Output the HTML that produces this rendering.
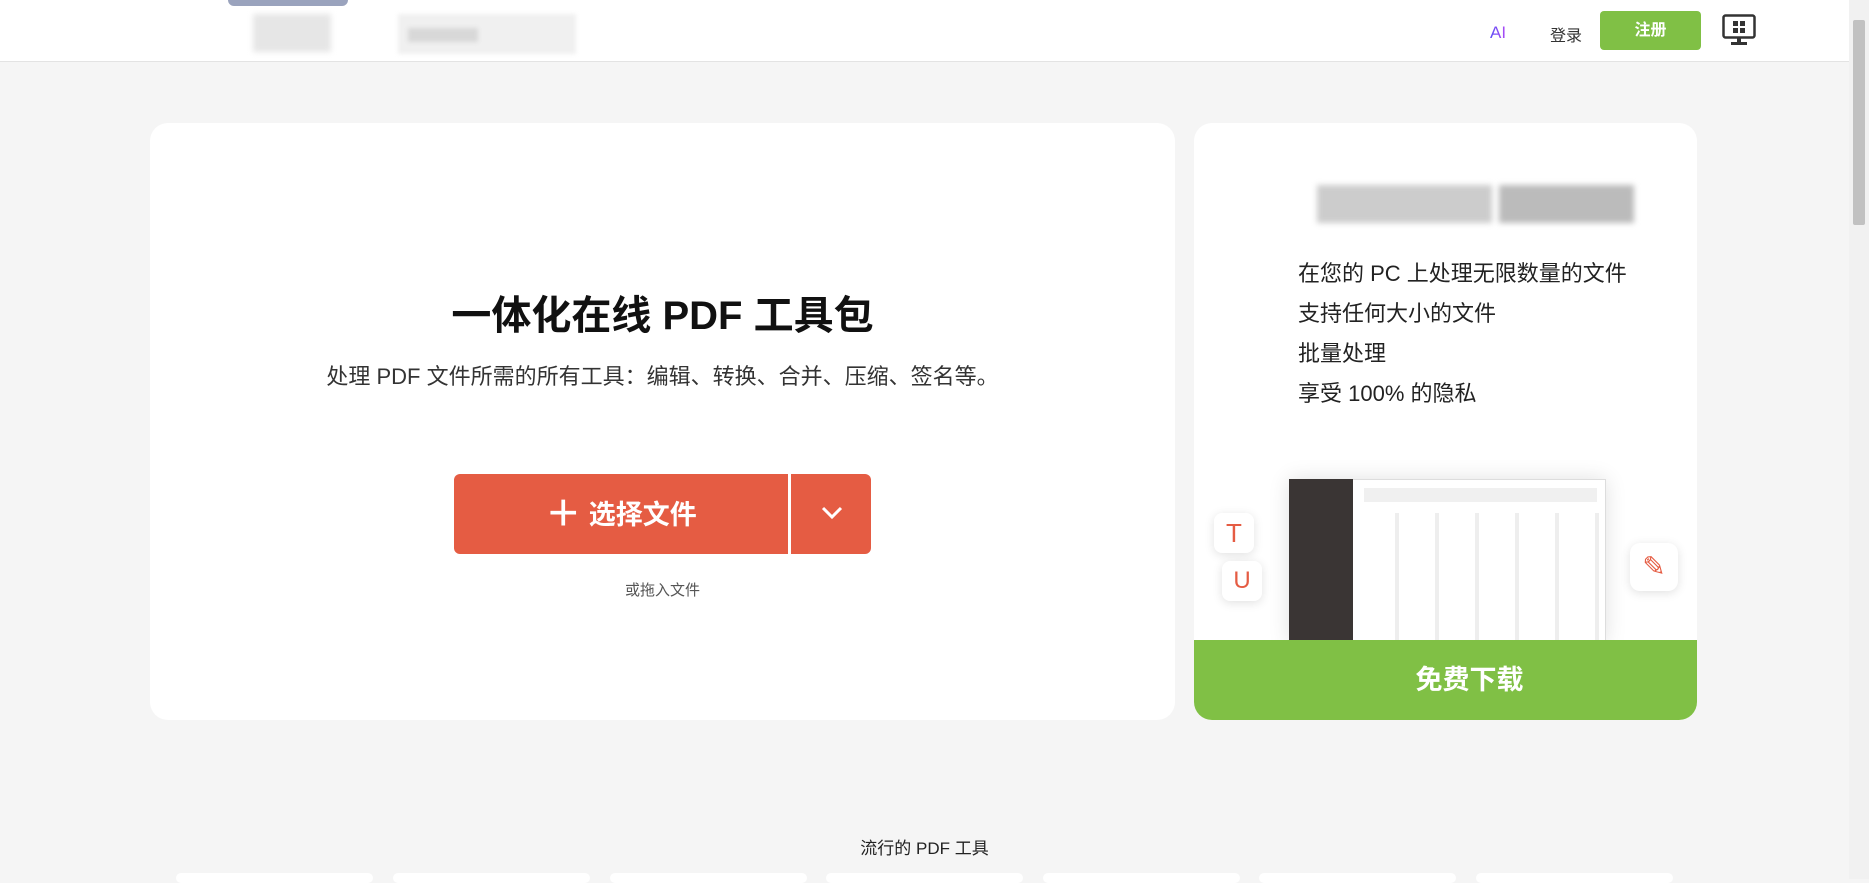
<!DOCTYPE html>
<html><head><meta charset="utf-8"><style>
*{box-sizing:border-box;margin:0;padding:0}
body{width:1869px;height:879px;overflow:hidden;background:#f5f5f5;font-family:"Liberation Sans","Noto Sans CJK SC",sans-serif;position:relative}
.hdr{position:absolute;left:0;top:0;width:1849px;height:62px;background:#fff;border-bottom:1px solid #e3e3e3}
.abs{position:absolute}
.card{position:absolute;background:#fff;border-radius:18px}
.sb{position:absolute;right:0;top:0;width:20px;height:879px;background:#f1f1f1}
</style></head><body>
<div class="hdr">
 <div class="abs" style="left:228px;top:0;width:120px;height:6px;background:#9aa3bd;border-radius:0 0 20px 20px"></div>
 <div class="abs" style="left:253px;top:14px;width:78px;height:38px;background:#e6e6e6;filter:blur(3px)"></div>
 <div class="abs" style="left:398px;top:14px;width:178px;height:40px;background:#f0f0f0;filter:blur(2px)"></div>
 <div class="abs" style="left:408px;top:28px;width:70px;height:14px;background:#d8d8d8;filter:blur(2px)"></div>
 <div class="abs" style="left:1490px;top:23px;font-size:17px;background:linear-gradient(90deg,#5b4cf5,#b04cf5);-webkit-background-clip:text;color:transparent">AI</div>
 <div class="abs" style="left:1550px;top:22px;font-size:16px;color:#333">登录</div>
 <div class="abs" style="left:1600px;top:11px;width:101px;height:39px;background:#80c045;border-radius:4px;color:#fff;font-size:16px;font-weight:bold;text-align:center;line-height:39px">注册</div>
 <svg class="abs" style="left:1722px;top:14px" width="34" height="32" viewBox="0 0 34 32"><rect x="1.5" y="1.5" width="31" height="22" rx="2" fill="none" stroke="#333" stroke-width="2.5"/><rect x="15" y="24" width="4" height="4" fill="#333"/><rect x="9" y="28" width="16" height="3" fill="#333"/><path d="M11 7h5v5h-5zM18 7h5v5h-5zM11 14h5v5h-5zM18 14h5v5h-5z" fill="#333"/></svg>
</div>
<div class="card" style="left:150px;top:123px;width:1025px;height:597px">
 <div class="abs" style="left:0;width:100%;top:160px;text-align:center;font-size:40px;font-weight:bold;color:#111">一体化在线 PDF 工具包</div>
 <div class="abs" style="left:0;width:100%;top:236px;text-align:center;font-size:22px;color:#333">处理 PDF 文件所需的所有工具：编辑、转换、合并、压缩、签名等。</div>
 <div class="abs" style="left:304px;top:351px;width:417px;height:80px;background:#e55c43;border-radius:6px"></div>
 <div class="abs" style="left:638px;top:351px;width:3px;height:80px;background:#fff"></div>
 <div class="abs" style="left:304px;top:351px;width:334px;height:80px;color:#fff;font-size:27px;font-weight:bold;text-align:center;line-height:80px"><span style="font-size:36px;vertical-align:-2px">＋</span> 选择文件</div>
 <svg class="abs" style="left:670px;top:382px" width="24" height="16" viewBox="0 0 24 16"><path d="M3 3l9 9 9-9" fill="none" stroke="#fff" stroke-width="3"/></svg>
 <div class="abs" style="left:0;width:1025px;top:456px;text-align:center;font-size:15px;color:#555">或拖入文件</div>
</div>
<div class="card" style="left:1194px;top:123px;width:503px;height:597px;overflow:hidden">
 <div class="abs" style="left:123px;top:62px;width:175px;height:38px;background:#ccc;filter:blur(3px)"></div>
 <div class="abs" style="left:305px;top:62px;width:135px;height:38px;background:#bbb;filter:blur(3px)"></div>
 <div class="abs" style="left:104px;top:131px;font-size:22px;color:#222;line-height:40px">在您的 PC 上处理无限数量的文件<br>支持任何大小的文件<br>批量处理<br>享受 100% 的隐私</div>
 <div class="abs" style="left:95px;top:356px;width:317px;height:165px;background:#fff;box-shadow:0 0 20px rgba(0,0,0,.12);border:1px solid #ddd"></div>
 <div class="abs" style="left:95px;top:356px;width:64px;height:165px;background:#3a3534"></div>
 <div class="abs" style="left:170px;top:365px;width:233px;height:14px;background:#f0f0f0"></div>
 <div class="abs" style="left:165px;top:390px;width:240px;height:130px;background:repeating-linear-gradient(90deg,#fff 0 36px,#eee 36px 40px)"></div>
 <div class="abs" style="left:20px;top:390px;width:40px;height:40px;background:#fff;border-radius:8px;box-shadow:0 2px 10px rgba(0,0,0,.12);color:#e55c43;font-size:26px;text-align:center;line-height:40px">T</div>
 <div class="abs" style="left:28px;top:438px;width:40px;height:40px;background:#fff;border-radius:8px;box-shadow:0 2px 10px rgba(0,0,0,.12);color:#e55c43;font-size:24px;text-align:center;line-height:40px">U</div>
 <div class="abs" style="left:436px;top:420px;width:48px;height:48px;background:#fff;border-radius:10px;box-shadow:0 2px 10px rgba(0,0,0,.12);color:#e55c43;font-size:28px;text-align:center;line-height:48px">✎</div>
 <div class="abs" style="left:0;top:517px;width:503px;height:80px;background:#80c045;color:#fff;font-size:27px;font-weight:bold;text-align:center;line-height:80px;padding-left:48px">免费下载</div>
</div>
<div class="abs" style="left:0;width:1849px;top:834px;text-align:center;font-size:17px;color:#222">流行的 PDF 工具</div>
<div class="abs" style="left:176px;top:873px;width:197px;height:10px;background:#fff;border-radius:8px"></div>
<div class="abs" style="left:393px;top:873px;width:197px;height:10px;background:#fff;border-radius:8px"></div>
<div class="abs" style="left:610px;top:873px;width:197px;height:10px;background:#fff;border-radius:8px"></div>
<div class="abs" style="left:826px;top:873px;width:197px;height:10px;background:#fff;border-radius:8px"></div>
<div class="abs" style="left:1043px;top:873px;width:197px;height:10px;background:#fff;border-radius:8px"></div>
<div class="abs" style="left:1259px;top:873px;width:197px;height:10px;background:#fff;border-radius:8px"></div>
<div class="abs" style="left:1476px;top:873px;width:197px;height:10px;background:#fff;border-radius:8px"></div>
<div class="sb"><div class="abs" style="left:4px;top:20px;width:12px;height:205px;background:#c1c1c1;border-radius:2px"></div></div>
</body></html>
